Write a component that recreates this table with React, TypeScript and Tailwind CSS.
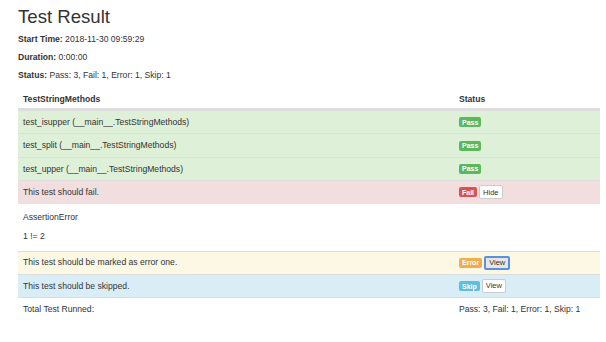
import React from "react"

type Row = {
  name: string
  status: "Pass" | "Fail" | "Error" | "Skip"
  action?: "Hide" | "View"
  focused?: boolean
}

const rows: Row[] = [
  { name: "test_isupper (__main__.TestStringMethods)", status: "Pass" },
  { name: "test_split (__main__.TestStringMethods)", status: "Pass" },
  { name: "test_upper (__main__.TestStringMethods)", status: "Pass" },
  { name: "This test should fail.", status: "Fail", action: "Hide" },
]

const rowBg: Record<Row["status"], string> = {
  Pass: "bg-[#dff0d8]",
  Fail: "bg-[#f2dede]",
  Error: "bg-[#fcf8e3]",
  Skip: "bg-[#d9edf7]",
}

const badgeBg: Record<Row["status"], string> = {
  Pass: "bg-[#5cb85c]",
  Fail: "bg-[#d9534f]",
  Error: "bg-[#f0ad4e]",
  Skip: "bg-[#5bc0de]",
}

function Badge({ status }: { status: Row["status"] }) {
  return (
    <span
      className={`${badgeBg[status]} inline-flex h-[10px] items-center rounded-[2px] px-[3px] text-[7px] font-bold leading-none text-white`}
    >
      {status}
    </span>
  )
}

function ActionButton({ label, focused }: { label: string; focused?: boolean }) {
  return (
    <button
      className={
        focused
          ? "ml-[2px] inline-flex h-[14px] items-center rounded-[2px] border-2 border-[#5b8fe0] bg-[#e6e6e6] px-[3px] text-[7.5px] leading-none text-[#333]"
          : "ml-[2px] inline-flex h-[14px] items-center rounded-[2px] border border-[#ccc] bg-white px-[3px] text-[7.5px] leading-none text-[#333]"
      }
    >
      {label}
    </button>
  )
}

function ResultRow({ row }: { row: Row }) {
  return (
    <div className={`${rowBg[row.status]} flex h-[23.4px] items-center border-t border-[#ddd]`}>
      <div className="w-[437px] pl-[5px]">{row.name}</div>
      <div className="flex flex-1 items-center pl-[4px]">
        <Badge status={row.status} />
        {row.action && <ActionButton label={row.action} focused={row.focused} />}
      </div>
    </div>
  )
}

export default function App() {
  return (
    <div
      className="h-[342px] w-[606px] overflow-hidden bg-white pl-[18px] pr-[6px] text-[8.6px] text-[#333]"
      style={{ fontFamily: '"Liberation Sans", Arial, sans-serif' }}
    >
      <h1 className="pt-[6px] text-[18.6px] leading-[22px]">Test Result</h1>
      <p className="mt-[6px] leading-[10px]">
        <strong>Start Time:</strong> 2018-11-30 09:59:29
      </p>
      <p className="mt-[8px] leading-[10px]">
        <strong>Duration:</strong> 0:00:00
      </p>
      <p className="mt-[8px] leading-[10px]">
        <strong>Status:</strong> Pass: 3, Fail: 1, Error: 1, Skip: 1
      </p>

      <div className="mt-[10px]">
        <div className="flex h-[20px] items-center border-b-2 border-[#ddd] font-bold">
          <div className="w-[437px] pl-[5px]">TestStringMethods</div>
          <div className="flex-1 pl-[4px]">Status</div>
        </div>

        {rows.map((row, i) => (
          <ResultRow key={i} row={row} />
        ))}

        <div className="h-[47px] pl-[5px] pt-[8px]">
          <p className="leading-[10px]">AssertionError</p>
          <p className="mt-[9px] leading-[10px]">1 != 2</p>
        </div>

        <ResultRow row={{ name: "This test should be marked as error one.", status: "Error", action: "View", focused: true }} />
        <ResultRow row={{ name: "This test should be skipped.", status: "Skip", action: "View" }} />

        <div className="flex h-[24px] items-center border-t border-[#ddd]">
          <div className="w-[437px] pl-[5px]">Total Test Runned:</div>
          <div className="flex-1 pl-[4px]">Pass: 3, Fail: 1, Error: 1, Skip: 1</div>
        </div>
      </div>
    </div>
  )
}
